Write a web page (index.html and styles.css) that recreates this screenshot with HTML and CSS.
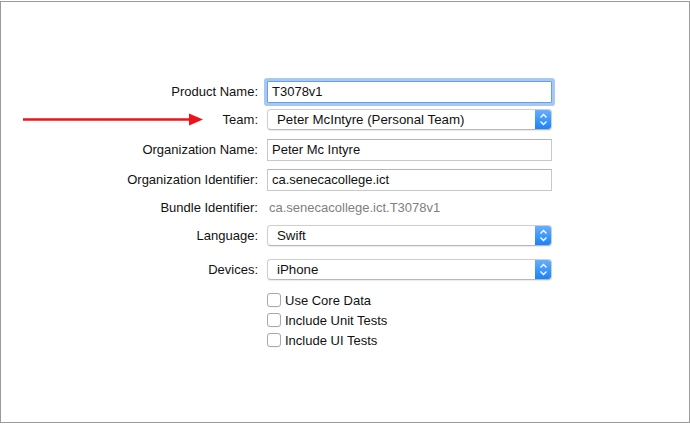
FILE: index.html
```html
<!DOCTYPE html>
<html>
<head>
<meta charset="utf-8">
<link rel="stylesheet" href="styles.css">
</head>
<body>
<div class="frame">
  <svg class="arrow" width="184" height="13" viewBox="0 0 184 13">
    <line x1="1" y1="6.5" x2="170" y2="6.5" stroke="#f0121a" stroke-width="2.6"/>
    <polygon points="167,0.5 181,6.5 167,12.5" fill="#f0121a"/>
  </svg>
  <div class="form">
    <div class="label r1">Product Name:</div>
    <div class="field r1"><div class="input focused">T3078v1</div></div>

    <div class="label r2">Team:</div>
    <div class="field r2"><div class="popup"><span class="ptext">Peter McIntyre (Personal Team)</span><span class="stepper"><svg width="17" height="21" viewBox="0 0 17 21"><path d="M5.5 8.5 L8.5 5.5 L11.5 8.5 M5.5 12.5 L8.5 15.5 L11.5 12.5" fill="none" stroke="#fff" stroke-width="1.4"/></svg></span></div></div>

    <div class="label r3">Organization Name:</div>
    <div class="field r3"><div class="input">Peter Mc Intyre</div></div>

    <div class="label r3">Organization Identifier:</div>
    <div class="field r3"><div class="input">ca.senecacollege.ict</div></div>

    <div class="label r4">Bundle Identifier:</div>
    <div class="field r4"><div class="plain">ca.senecacollege.ict.T3078v1</div></div>

    <div class="label r4">Language:</div>
    <div class="field r4"><div class="popup"><span class="ptext">Swift</span><span class="stepper"><svg width="17" height="21" viewBox="0 0 17 21"><path d="M5.5 8.5 L8.5 5.5 L11.5 8.5 M5.5 12.5 L8.5 15.5 L11.5 12.5" fill="none" stroke="#fff" stroke-width="1.4"/></svg></span></div></div>

    <div class="label r5">Devices:</div>
    <div class="field r5"><div class="popup"><span class="ptext">iPhone</span><span class="stepper"><svg width="17" height="21" viewBox="0 0 17 21"><path d="M5.5 8.5 L8.5 5.5 L11.5 8.5 M5.5 12.5 L8.5 15.5 L11.5 12.5" fill="none" stroke="#fff" stroke-width="1.4"/></svg></span></div></div>

    <div class="label r6"></div>
    <div class="field r6 checks">
      <div class="check"><span class="box"></span><span>Use Core Data</span></div>
      <div class="check"><span class="box"></span><span>Include Unit Tests</span></div>
      <div class="check"><span class="box"></span><span>Include UI Tests</span></div>
    </div>
  </div>
</div>
</body>
</html>
```

FILE: styles.css
```css
html, body {
  margin: 0;
  padding: 0;
  background: #fff;
}
body {
  font-family: "Liberation Sans", Arial, sans-serif;
  font-size: 13px;
  color: #111;
}
.frame {
  position: relative;
  margin-top: 1px;
  width: 690px;
  height: 422px;
  box-sizing: border-box;
  border: 1px solid #9b9b9b;
  padding-top: 79px;
}
.arrow {
  position: absolute;
  left: 21px;
  top: 111px;
}
.form {
  display: grid;
  grid-template-columns: 257px 285px;
  column-gap: 9px;
  align-items: center;
}
.label {
  text-align: right;
  height: 22px;
  line-height: 22px;
  white-space: nowrap;
}
.field {
  height: 22px;
}
.r2 { margin-top: 6px; }
.r3 { margin-top: 8px; }
.r4 { margin-top: 6px; }
.r5 { margin-top: 12px; }
.r6 { margin-top: 9px; height: auto; align-self: start; }
.input {
  box-sizing: border-box;
  height: 22px;
  border: 1px solid #c8c8c8;
  border-top-color: #b4b4b4;
  padding-left: 4px;
  line-height: 20px;
  background: #fff;
}
.input.focused {
  border-color: #6a9fe2;
  box-shadow: 0 0 0 3px #a6c9f4;
  border-radius: 1px;
}
.plain {
  padding-left: 2px;
  line-height: 22px;
  color: #808080;
}
.popup {
  box-sizing: border-box;
  height: 21px;
  display: flex;
  align-items: center;
  border: 1px solid #cfcfcf;
  border-bottom-color: #b8b8b8;
  border-radius: 4px;
  box-shadow: 0 0.5px 1px rgba(0,0,0,0.08);
  background: #fff;
  overflow: hidden;
}
.ptext {
  flex: 1;
  padding-left: 9px;
  line-height: 19px;
  font-size: 13.3px;
}
.stepper {
  width: 17px;
  height: 21px;
  margin-right: -1px;
  margin-top: -1px;
  margin-bottom: -1px;
  background: linear-gradient(#6ab1fb, #1780fb);
  border-radius: 0 4px 4px 0;
  display: flex;
}
.checks {
  display: flex;
  flex-direction: column;
}
.check {
  display: flex;
  align-items: center;
  height: 20px;
  gap: 4px;
}
.box {
  box-sizing: border-box;
  width: 14px;
  height: 14px;
  border: 1px solid #a9a9a9;
  border-radius: 3px;
  background: #fff;
  box-shadow: 0 0.5px 0.5px rgba(0,0,0,0.06);
}
```
